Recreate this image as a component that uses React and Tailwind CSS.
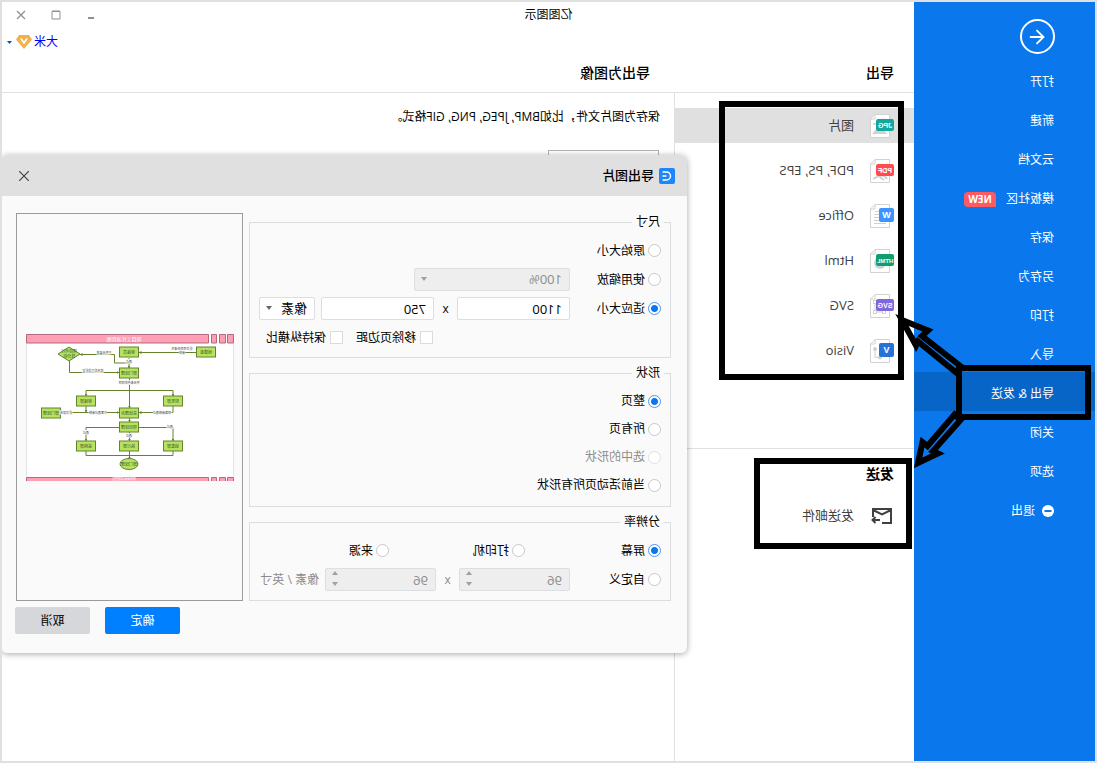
import { useState } from "react";
import { ArrowLeft } from "lucide-react";

const menuItems = [
  "打开",
  "新建",
  "云文档",
  "模板社区",
  "保存",
  "另存为",
  "打印",
  "导入",
  "导出 & 发送",
  "关闭",
  "选项",
  "退出",
];

const formats = [
  { label: "图片", tag: "JPG", color: "#12a89d", art: "image" },
  { label: "PDF, PS, EPS", tag: "PDF", color: "#ff4d4f", art: "pdf" },
  { label: "Office", tag: "W", color: "#3b94ff", art: "lines" },
  { label: "Html", tag: "HTML", color: "#109e6e", art: "globe" },
  { label: "SVG", tag: "SVG", color: "#7f67e0", art: "nodes" },
  { label: "Visio", tag: "V", color: "#2572d8", art: "flow" },
];

const FileArt = ({ art }) => {
  if (art === "image")
    return <path d="M7 20l5-7 3 3 2-2 5 6zM17 9a2 2 0 104 0" fill="#d2d2d2" />;
  if (art === "pdf")
    return <path d="M7 20c3-5 7-4 14 0M14 14c1 3 1 4-4 7" fill="none" stroke="#d2d2d2" strokeWidth="2" />;
  if (art === "lines")
    return <path d="M8 7.500h11M8 10.500h12M8 13.500h12M8 16.500h12M8 19.500h12" stroke="#cfcfcf" />;
  if (art === "globe") return <circle cx="14" cy="14" r="6" fill="#d2d2d2" />;
  if (art === "nodes")
    return (
      <path d="M8.500 6.500h3v3h-3zM17.500 6.500h3v3h-3zM8.500 16.500h3v3h-3zM17.500 16.500h3v3h-3zM11.500 18h6M10 10v7M19 10v7" fill="none" stroke="#cfcfcf" />
    );
  return (
    <g fill="#cfcfcf" stroke="#cfcfcf">
      <circle cx="19" cy="10" r="1.500" />
      <circle cx="14" cy="18.500" r="1.500" />
      <path d="M19 10v8.500h-5" fill="none" />
    </g>
  );
};

const FileIcon = ({ tag, color, art }) => {
  const single = tag.length === 1;
  return (
    <svg width="24" height="24" viewBox="0 0 24 24" className="shrink-0">
      <path d="M4.500.500h14.500l4.500 4.500v18.500h-19z" fill="#fff" stroke="#d2d2d2" />
      <path d="M19 .500v4.500h4.500" fill="none" stroke="#d2d2d2" />
      <FileArt art={art} />
      <rect y={single ? 4 : 5} width={single ? 15 : 18} height={single ? 14 : 12} rx="2" fill={color} />
      <text
        x={single ? 7.5 : 9}
        y={single ? 14 : 13.5}
        textAnchor="middle"
        fontFamily="Liberation Sans, sans-serif"
        fontSize={single ? 9 : tag.length === 4 ? 6 : 7}
        fontWeight="700"
        fill="#fff"
      >
        {tag}
      </text>
    </svg>
  );
};

const Radio = ({ name, label, className = "", ...props }) => (
  <label className={`flex items-center gap-[3px] ${props.disabled ? "text-[#8c8c8c]" : ""} ${className}`}>
    <input
      type="radio"
      name={name}
      className="size-[13px] shrink-0 appearance-none rounded-full border border-[#c8c8c8] bg-white checked:border-[#4796f0] checked:bg-[radial-gradient(circle,#0a77ec_3px,#fff_4px)] disabled:border-[#e0e0e0]"
      {...props}
    />
    {label}
  </label>
);

const Checkbox = ({ label, className = "" }) => (
  <label className={`flex items-center gap-1 ${className}`}>
    <input type="checkbox" className="size-[13px] shrink-0 appearance-none border border-[#d9dbe0] bg-white checked:bg-[#0a77ec]" />
    {label}
  </label>
);

const Group = ({ title, className, children }) => (
  <fieldset className={`border border-[#dcdde0] pl-[9px] ${className}`}>
    <legend className="-ml-[3px] px-1 leading-[18px]">{title}</legend>
    {children}
  </fieldset>
);

const field =
  "h-[23px] w-full appearance-none rounded-xs border border-[#dcdee2] bg-white px-[7px] text-[13px] disabled:bg-[#eeeeee] disabled:text-[#8c8c8c]";

const Dropdown = ({ label, value, className, ...props }) => (
  <div className={`relative shrink-0 ${className}`}>
    <select aria-label={label} className={field} {...props}>
      <option>{value}</option>
    </select>
    <svg viewBox="0 0 6 4" className="pointer-events-none absolute top-[9px] right-[7px] h-1 w-1.5">
      <path d="M0 0h6L3 4z" fill={props.disabled ? "#a0a0a0" : "#666"} />
    </svg>
  </div>
);

const Spinner = ({ label, className }) => (
  <div className={`relative shrink-0 ${className}`}>
    <input aria-label={label} defaultValue="96" disabled className={field} />
    <svg viewBox="0 0 6 15" className="pointer-events-none absolute top-[3px] right-[7px] h-[15px] w-1.5">
      <path d="M0 4h6L3 0zM0 11h6L3 15z" fill="#a0a0a0" />
    </svg>
  </div>
);

const nodes = [
  [28, 18, "创建者"],
  [105, 18, "审核员"],
  [105, 39, "部门经理"],
  [148, 67, "审核部"],
  [61, 67, "财务部"],
  [183, 79, "部门经理"],
  [105, 79, "总经理办"],
  [105, 93, "项目经理"],
  [148, 112, "采购部"],
  [105, 112, "执行部"],
  [61, 112, "销售部"],
];

const notes = [
  [52, 16, "提交项目申请书"],
  [52, 20, "审批"],
  [130, 20, "不符合要求"],
  [141, 38, "修改后再次提交"],
  [105, 29, "通过"],
  [105, 50, "符合条件的项目"],
  [168, 80, "提交报告"],
  [136, 80, "方案通过审核"],
  [72, 80, "预算审核通过"],
  [148, 100, "通过"],
  [105, 103, "通过"],
  [64, 94, "通过"],
];

const Flowchart = () => (
  <svg viewBox="0 0 208 147" className="w-full">
    <defs>
      <marker id="tip" viewBox="0 0 6 6" refX="5" refY="3" markerWidth="3" markerHeight="3" orient="auto">
        <path d="M0 0l6 3-6 3z" fill="#66822f" />
      </marker>
    </defs>
    <rect x="0.500" width="207" height="147" fill="#fff" stroke="#e4e4e4" />
    <g fill="#ff9fb5" stroke="#b26a7d">
      <path d="M.5.500h6v8.500h-6zM8.500.500h6v8.500h-6zM17.500.500h5v8.500h-5zM25.500.500h182v8.500h-182z" />
      <path d="M.5 143.500h6v5h-6zM8.500 143.500h6v5h-6zM17.500 143.500h5v5h-5zM25.500 143.500h182v5h-182z" />
    </g>
    <g fill="none" stroke="#66822f" markerEnd="url(#tip)">
      <path d="M38 18.500H95" />
      <path d="M105 24V34" />
      <path d="M105 29H119.500V20.500H154" />
      <path d="M164.500 27V38.500H115" />
      <path d="M104.500 44V74" />
      <path d="M104.500 56.500H148V62" />
      <path d="M104.500 56.500H61V62" />
      <path d="M173 78.500H115" />
      <path d="M148 72V78" />
      <path d="M61 72V78.500H95" />
      <path d="M104.500 84V88" />
      <path d="M104.500 98V107" />
      <path d="M114 93.500H148V107" />
      <path d="M95 93.500H61V107" />
      <path d="M104.500 117V125" />
    </g>
    <path d="M148 117V121.500H61V117" fill="none" stroke="#66822f" />
    <g fill="#b5e35f" stroke="#66822f">
      {nodes.map(([x, y], i) => (
        <rect key={i} x={x - 9.5} y={y - 5} width="19" height="10" />
      ))}
      <path d="M165 13l11 7-11 7-11-7z" />
      <ellipse cx="105" cy="130" rx="9" ry="5.500" />
    </g>
    <g fontSize="4" textAnchor="middle" fill="#3d4a20">
      {nodes.map(([x, y, text], i) => (
        <text key={i} x={x} y={y + 2}>{text}</text>
      ))}
      <text x="165" y="19">项目可行</text>
      <text x="165" y="24">性分析</text>
      <text x="105" y="132">部门经理</text>
    </g>
    <g fontSize="3" textAnchor="middle" fill="#444" stroke="#fff" strokeWidth="1" paintOrder="stroke">
      {notes.map(([x, y, text], i) => (
        <text key={i} x={x} y={y}>{text}</text>
      ))}
    </g>
    <text x="110" y="7" fontSize="5" textAnchor="middle" fill="#fff">项目工作流程图</text>
    <text x="110" y="146" fontSize="3" textAnchor="middle" fill="#fff">项目审批流程管理</text>
  </svg>
);

const ExportDialog = () => {
  const [size, setSize] = useState("适应大小");
  const [shape, setShape] = useState("整页");

  return (
    <section
      role="dialog"
      aria-label="导出图片"
      className="absolute top-[153px] -right-px left-[408px] rounded-md bg-[#fafafa] shadow-[0_1px_6px_rgba(0,0,0,0.35)]"
    >
      <header className="flex h-[41px] items-center rounded-t-md bg-[#e0e0e0] pr-[17px] pl-3">
        <svg width="16" height="16" viewBox="0 0 16 16">
          <rect width="16" height="16" rx="2" fill="#1d86fb" />
          <path d="M12.500 4H8.500a4 4 0 000 8h4M8.500 8h4" fill="none" stroke="#fff" strokeWidth="1.500" />
        </svg>
        <h2 className="ml-[5px] flex-1 text-[13px] font-medium">导出图片</h2>
        <button aria-label="关闭" className="p-px">
          <svg width="10" height="10" viewBox="0 0 10 10">
            <path d="M0 0l10 10M10 0L0 10" stroke="#444" strokeWidth="1.200" />
          </svg>
        </button>
      </header>

      <div className="flex gap-1.5 pt-[17px] pr-[15px] pl-4">
        <div className="flex min-w-0 flex-1 flex-col gap-1.5">
          <Group title="尺寸" className="pb-2">
            <div className="flex flex-col gap-1.5 pt-2">
              <div className="flex h-[23px] items-center">
                <Radio name="size" label="原始大小" checked={size === "原始大小"} onChange={() => setSize("原始大小")} />
              </div>
              <div className="flex h-[23px] items-center">
                <Radio name="size" label="使用缩放" className="w-[91px]" checked={size === "使用缩放"} onChange={() => setSize("使用缩放")} />
                <Dropdown label="缩放" value="100%" className="w-[156px]" disabled />
              </div>
              <div className="flex h-[23px] items-center">
                <Radio name="size" label="适应大小" className="w-[91px]" checked={size === "适应大小"} onChange={() => setSize("适应大小")} />
                <div className="w-[113px]">
                  <input aria-label="宽度" defaultValue="1100" className={field} />
                </div>
                <span className="w-[23px] text-center">x</span>
                <div className="w-[113px]">
                  <input aria-label="高度" defaultValue="750" className={field} />
                </div>
                <Dropdown label="单位" value="像素" className="ml-1.5 w-14" />
              </div>
              <div className="flex h-[23px] items-center pl-[228px]">
                <Checkbox label="移除页边距" className="w-[90px]" />
                <Checkbox label="保持纵横比" />
              </div>
            </div>
          </Group>

          <Group title="形状" className="pb-[7px]">
            <div className="pt-[5px]">
              {["整页", "所有页", "选中的形状", "当前活动页所有形状"].map((item) => (
                <Radio
                  key={item}
                  name="shape"
                  label={item}
                  className="h-7"
                  disabled={item === "选中的形状"}
                  checked={shape === item}
                  onChange={() => setShape(item)}
                />
              ))}
            </div>
          </Group>

          <Group title="分辨率" className="pb-[9px]">
            <div className="flex flex-col gap-1.5 pt-2">
              <div className="flex h-[23px] items-center">
                <Radio name="dpi" label="屏幕" className="w-[136px]" defaultChecked />
                <Radio name="dpi" label="打印机" className="w-[136px]" />
                <Radio name="dpi" label="来源" />
              </div>
              <div className="flex h-[23px] items-center">
                <Radio name="dpi" label="自定义" className="w-[91px]" />
                <Spinner label="水平分辨率" className="w-[111px]" />
                <span className="w-[23px] text-center text-[#8c8c8c]">x</span>
                <Spinner label="垂直分辨率" className="w-[111px]" />
                <span className="ml-1.5 text-[#8c8c8c]">像素 / 英寸</span>
              </div>
            </div>
          </Group>
        </div>

        <div className="flex w-[227px] shrink-0 items-center border border-[#9b9b9b] pr-[9px] pl-2">
          <Flowchart />
        </div>
      </div>

      <footer className="flex justify-end gap-[15px] pt-1.5 pr-3.5 pb-[19px]">
        <button className="h-[27px] w-[75px] rounded-xs bg-[#0080ff] text-white">确定</button>
        <button className="h-[27px] w-[75px] rounded-xs bg-[#d5d7db]">取消</button>
      </footer>
    </section>
  );
};

const Sidebar = () => (
  <nav className="w-[181px] shrink-0 bg-[#0a77ec] pt-[17px] text-white">
    <button aria-label="返回" className="mb-1.5 ml-10 flex size-[35px] items-center justify-center rounded-full border-2 border-white">
      <ArrowLeft size={22} strokeWidth={2} />
    </button>
    {menuItems.map((item) => (
      <a
        key={item}
        href="#"
        className={`flex h-[39px] items-center pt-[5px] pl-[41px] ${item.startsWith("导出") ? "bg-[#0865c8]" : ""}`}
      >
        {item === "退出" && (
          <svg width="12" height="12" viewBox="0 0 12 12" className="mr-[7px]">
            <circle cx="6" cy="6" r="6" fill="#fff" />
            <path d="M2.500 6h7" stroke="#0a77ec" strokeWidth="2" />
          </svg>
        )}
        {item}
        {item === "模板社区" && (
          <span className="ml-2.5 h-[15px] w-8 rounded-[4px] rounded-bl-none bg-[#ff5a5f] text-center text-[10px] leading-[15px] font-bold">
            NEW
          </span>
        )}
      </a>
    ))}
  </nav>
);

const Header = () => (
  <header className="border-b border-[#e0e0e0]">
    <div className="flex h-[26px] items-center">
      <h1 className="flex-1 text-center">亿图图示</h1>
      <div className="flex w-[181px] justify-end pr-0.5 text-[#909090]">
        <button aria-label="最小化" className="flex w-[35px] justify-center">
          <svg width="10" height="10" viewBox="0 0 10 10">
            <path d="M2 8h6" stroke="currentColor" strokeWidth="2" />
          </svg>
        </button>
        <button aria-label="最大化" className="flex w-[35px] justify-center">
          <svg width="10" height="10" viewBox="0 0 10 10">
            <path d="M1 1.500h8v7.500h-8zM1 1h8" fill="none" stroke="currentColor" />
          </svg>
        </button>
        <button aria-label="关闭窗口" className="flex w-[35px] justify-center">
          <svg width="10" height="10" viewBox="0 0 10 10">
            <path d="M1 1l8 8M9 1L1 9" stroke="currentColor" strokeWidth="1.300" />
          </svg>
        </button>
      </div>
    </div>
    <div className="flex h-7 items-center justify-end pr-[5px]">
      <a href="#" className="text-[#0000ff]">大米</a>
      <svg width="16" height="14" viewBox="0 0 16 14" className="mx-0.5">
        <path d="M3 0h10l3 4.500L8 14 0 4.500z" fill="#f2b04a" />
        <path d="M5 3.500l3 4.500 3-4.500" fill="none" stroke="#fff" strokeWidth="1.800" />
      </svg>
      <svg width="5" height="3" viewBox="0 0 5 3" className="ml-0.5">
        <path d="M0 0h5L2.500 3z" fill="#0057b0" />
      </svg>
    </div>
    <div className="flex h-9 items-center pb-0.5 text-sm font-medium">
      <h2 className="w-[239px] pl-5">导出</h2>
      <h2 className="pl-[25px]">导出为图像</h2>
    </div>
  </header>
);

const ExportNav = () => (
  <div className="w-[240px] shrink-0 border-r border-[#e0e0e0] pt-[15px] text-[13px] text-[#404040]">
    <div className="flex flex-col gap-2.5">
      {formats.map((format, index) => (
        <a key={format.label} href="#" className={`flex h-[35px] items-center gap-4 pl-5 ${index === 0 ? "bg-[#e0e0e0]" : ""}`}>
          <FileIcon {...format} />
          {format.label}
        </a>
      ))}
    </div>
    <div className="mt-20 border-t border-[#e0e0e0] pt-[15px]">
      <h2 className="pl-5 text-sm leading-5 font-bold text-black">发送</h2>
      <a href="#" className="mt-3.5 flex h-[35px] items-center gap-4 pl-5">
        <svg width="24" height="20" viewBox="0 0 24 20" fill="none" stroke="#404040" strokeWidth="2">
          <path d="M12 17H3V3h18v8M3 4l9 4.500L21 4M14 14h8M18.500 11l3 3-3 3" />
        </svg>
        发送邮件
      </a>
    </div>
  </div>
);

// Black frames and arrows drawn over the window
const Annotations = () => (
  <div className="pointer-events-none">
    <div className="absolute top-[99px] left-[191px] h-[279px] w-[185px] border-6 border-black" />
    <div className="absolute top-[456px] left-[183px] h-[91px] w-[158px] border-6 border-black" />
    <div className="absolute top-[363px] left-1 h-[55px] w-[135px] border-6 border-black" />
    <svg
      width="80"
      height="164"
      viewBox="130 310 80 164"
      className="absolute top-[308px] left-[128px]"
      fill="none"
      stroke="#000"
      strokeWidth="6"
      strokeMiterlimit="10"
    >
      <path d="M195 320L169 330.500l6 5.500L136 366.500l5.500 5.500L179 341.500l2 4z" />
      <path d="M179 463L174.500 442l-5 4L142.500 414.500l-6 5.500L164 451l-5 2.500z" />
    </svg>
  </div>
);

export default function App() {
  return (
    <div className="relative flex min-h-screen -scale-x-100 overflow-hidden border-2 border-[#e0e0e0] bg-white font-['Open_Sans','Noto_Sans_CJK_SC',sans-serif] text-xs whitespace-nowrap text-black">
      <Sidebar />
      <main className="flex min-w-0 flex-1 flex-col">
        <Header />
        <div className="flex flex-1">
          <ExportNav />
          <div className="min-w-0 flex-1 pt-4 pl-3.5">
            <p>保存为图片文件，比如BMP, JPEG, PNG, GIF格式。</p>
            <button aria-label="导出图像" className="mt-[25px] ml-px h-20 w-[111px] border border-[#b4b4b4]" />
          </div>
        </div>
      </main>
      <ExportDialog />
      <Annotations />
    </div>
  );
}
